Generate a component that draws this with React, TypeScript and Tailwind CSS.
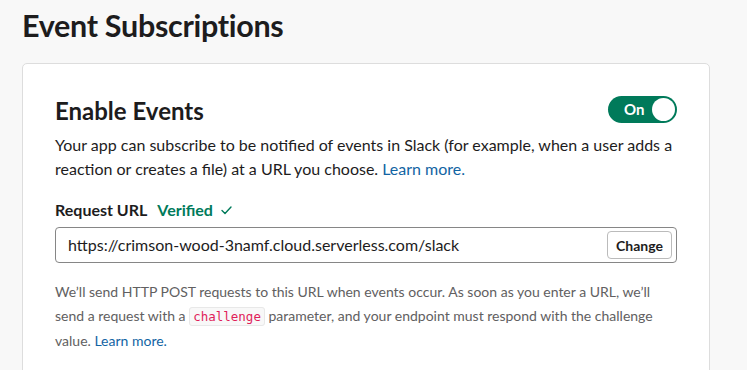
import React from 'react';

const lato = { fontFamily: 'Lato, "Noto Sans", sans-serif' };

function Toggle({ on }: { on: boolean }) {
  return (
    <button className="flex items-center h-[27px] w-[69px] rounded-full bg-[#007a5a] pl-[16px] pr-[2px] justify-between">
      <span className="text-white text-[15px] font-bold leading-none">{on ? 'On' : 'Off'}</span>
      <span className="h-[23px] w-[23px] rounded-full bg-white" />
    </button>
  );
}

export default function App() {
  return (
    <div className="h-[370px] w-[747px] overflow-hidden bg-[#f8f8f8] text-[#1d1c1d]" style={lato}>
      <h1 className="pl-[22px] pt-[6px] text-[30.5px] font-bold leading-[38px] tracking-[-0.3px]">Event Subscriptions</h1>
      <div className="ml-[22px] mt-[19px] w-[688px] rounded-[5px] border border-[#dddddd] bg-white pl-[32px] pr-[32px] pt-[32px] pb-[40px]">
        <div className="flex items-start justify-between">
          <h2 className="text-[24px] font-bold leading-[30px]">Enable Events</h2>
          <Toggle on />
        </div>
        <p className="mt-[7px] text-[16px] leading-[24px]">
          Your app can subscribe to be notified of events in Slack (for example, when a user adds a reaction or creates a file) at a URL you choose.{' '}
          <a className="text-[#1264a3]">Learn more.</a>
        </p>
        <div className="mt-[18px] flex items-center gap-[10px] text-[16px] font-bold leading-[22px]">
          <span>Request URL</span>
          <span className="flex items-center gap-[8px] text-[#007a5a]">
            Verified
            <svg width="11" height="9" viewBox="0 0 11 9" fill="none">
              <path d="M1 4.5 L4 7.5 L10 1" stroke="#007a5a" strokeWidth="1.4" strokeLinecap="round" strokeLinejoin="round" />
            </svg>
          </span>
        </div>
        <div className="mt-[6px] flex h-[36px] items-center justify-between rounded-[4px] border border-[#868686] pl-[12px] pr-[4px]">
          <span className="text-[16px]">https://crimson-wood-3namf.cloud.serverless.com/slack</span>
          <button className="h-[28px] rounded-[4px] border border-[#bbbbbb] px-[8px] text-[14px] font-bold">Change</button>
        </div>
        <p className="mt-[17px] text-[14px] leading-[24px] text-[#616061]">
          We’ll send HTTP POST requests to this URL when events occur. As soon as you enter a URL, we’ll send a request with a{' '}
          <code
            className="rounded-[3px] border border-[#e8e8e8] bg-[#f8f8f8] px-[3px] py-[1px] text-[12.5px] text-[#e01e5a]"
            style={{ fontFamily: '"DejaVu Sans Mono", "Liberation Mono", monospace' }}
          >
            challenge
          </code>{' '}
          parameter, and your endpoint must respond with the challenge value.{' '}
          <a className="text-[#1264a3]">Learn more.</a>
        </p>
      </div>
    </div>
  );
}
